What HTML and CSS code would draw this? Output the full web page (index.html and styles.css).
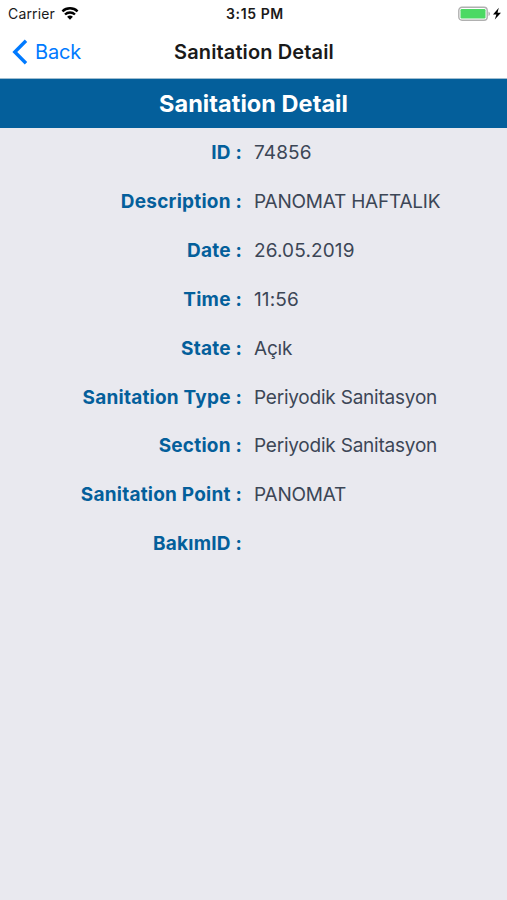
FILE: index.html
```html
<!DOCTYPE html>
<html lang="en">
<head>
  <meta charset="UTF-8">
  <meta name="viewport" content="width=device-width, initial-scale=1.0">
  <title>Sanitation Detail</title>
  <link rel="stylesheet" href="styles.css">
</head>
<body>
  <div class="status-bar">
    <div class="carrier">
      <span class="carrier-name">Carrier</span>
      <svg class="wifi" width="18" height="13" viewBox="0 0 18 13">
        <path d="M1.4 4.3a11.1 11.1 0 0 1 15.2 0M4 7.5a7.3 7.3 0 0 1 10 0" fill="none" stroke="#000" stroke-width="2.4"/>
        <path d="M9 12.7L6.1 9.8a4.3 4.3 0 0 1 5.8 0z"/>
      </svg>
    </div>
    <span class="clock">3:15 PM</span>
    <div class="power">
      <svg width="44" height="16" viewBox="0 0 44 16">
        <rect x="0.8" y="1.3" width="28.4" height="12.9" rx="3.2" fill="#fff" stroke="#b0b0b0" stroke-width="1.4"/>
        <rect x="2.5" y="3" width="25" height="9.5" rx="1.2" fill="#4cd964"/>
        <path d="M30.5 5.5v4.6a2.5 2.5 0 0 0 0-4.6z" fill="#b0b0b0"/>
        <path d="M40.8 1.8L35 8.4h3.4L36.8 13.6 43 6.7h-3.5z"/>
      </svg>
    </div>
  </div>

  <div class="nav-bar">
    <a class="back">
      <svg class="chevron" width="16" height="26" viewBox="0 0 16 26">
        <path d="M14 1.8L2.8 13 14 24.2" fill="none" stroke="#007aff" stroke-width="3.4"/>
      </svg>
      <span class="back-text">Back</span>
    </a>
    <span class="nav-title">Sanitation Detail</span>
  </div>

  <h1 class="header">Sanitation Detail</h1>

  <div class="details">
    <div class="row"><span class="label">ID :</span><span class="value number">74856</span></div>
    <div class="row"><span class="label">Description :</span><span class="value">PANOMAT HAFTALIK</span></div>
    <div class="row"><span class="label">Date :</span><span class="value number">26.05.2019</span></div>
    <div class="row"><span class="label">Time :</span><span class="value number">11:56</span></div>
    <div class="row"><span class="label">State :</span><span class="value">Açık</span></div>
    <div class="row"><span class="label">Sanitation Type :</span><span class="value">Periyodik Sanitasyon</span></div>
    <div class="row"><span class="label">Section :</span><span class="value">Periyodik Sanitasyon</span></div>
    <div class="row"><span class="label">Sanitation Point :</span><span class="value">PANOMAT</span></div>
    <div class="row"><span class="label">BakımID :</span><span class="value"></span></div>
  </div>
</body>
</html>
```
FILE: styles.css
```css
body {
  margin: 0;
  height: 900px;
  background-color: #e9e9ef;
  color: #1a1a1a;
  font-family: Inter, "Liberation Sans", sans-serif;
  overflow: hidden;
}

/* Status bar */
.status-bar {
  display: grid;
  grid-template-columns: 1fr auto 1fr;
  align-items: center;
  height: 27px;
  padding: 0 5px 0 8px;
  background-color: #fff;
  font-size: 14px;
}

.carrier {
  display: flex;
  align-items: center;
  gap: 6px;
}

.carrier-name {
  letter-spacing: 0.15px;
}

.wifi {
  margin-bottom: 1px;
}

.clock {
  font-size: 14px;
  font-weight: 600;
  letter-spacing: 0.6px;
}

.power {
  display: flex;
  justify-content: flex-end;
}

/* Navigation bar */
.nav-bar {
  display: grid;
  grid-template-columns: 1fr auto 1fr;
  align-items: center;
  height: 49px;
  padding: 0 11px 2px 12px;
  background-color: #fff;
  border-bottom: 1px solid #9fbdd0;
}

.back {
  display: flex;
  align-items: center;
  gap: 7px;
  color: #007aff;
  font-size: 20px;
  letter-spacing: -0.2px;
}

.nav-title {
  font-size: 20px;
  font-weight: 600;
  letter-spacing: 0.12px;
}

/* Blue title strip */
.header {
  margin: 0;
  padding-top: 1px;
  height: 48px;
  background-color: #045f9b;
  color: #fff;
  font-size: 23.5px;
  font-weight: 700;
  letter-spacing: 0.05px;
  line-height: 48px;
  text-align: center;
}

/* Label and value rows */
.details {
  padding-top: 1.3px;
}

.row {
  display: grid;
  grid-template-columns: 242px 1fr;
  gap: 12px;
  height: 48.85px;
  line-height: 48.85px;
  font-size: 19px;
}

.label {
  color: #045f9b;
  font-weight: 700;
  font-feature-settings: "calt" 0;
  letter-spacing: 0.22px;
  text-align: right;
}

.value {
  color: #3c4656;
  letter-spacing: -0.22px;
}

.number {
  letter-spacing: 0.13px;
}
```
